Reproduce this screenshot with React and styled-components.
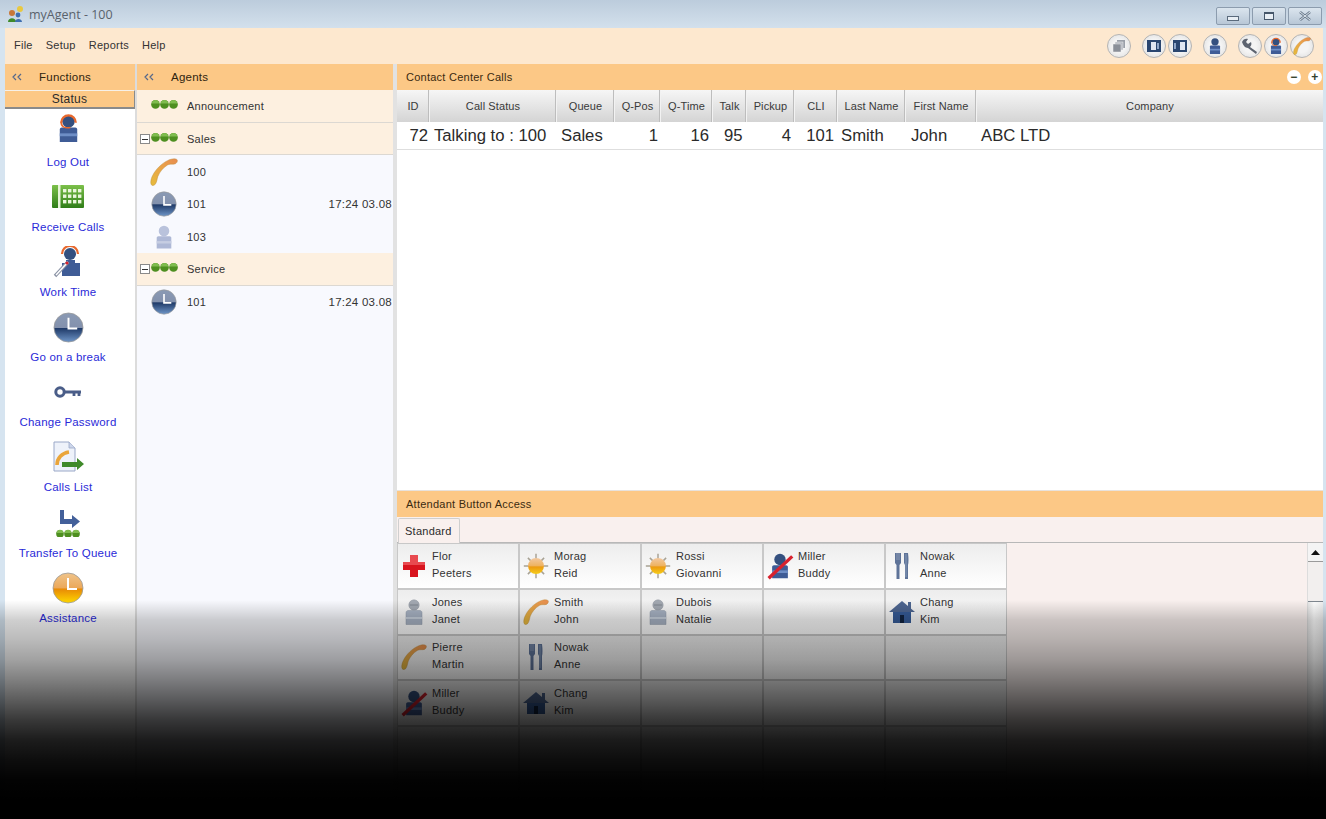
import styled, { createGlobalStyle } from "styled-components";

const GlobalStyle = createGlobalStyle`
  html, body {
    margin: 0;
    padding: 0;
    background: #000;
  }
  body {
    font-family: "Liberation Sans", Arial, sans-serif;
    font-size: 11px;
    letter-spacing: 0.25px;
    color: #2b2b2b;
  }
`;

const TABLE_COLUMNS = "33px 127px 58px 46px 52px 34px 48px 43px 68px 71px 1fr";

const PhoneIcon = ({ size = 28 }) => (
  <svg width={size} height={size} viewBox="0 0 32 32">
    <defs>
      <linearGradient id="phoneFill" x1="0" y1="1" x2="1" y2="0">
        <stop offset="0" stopColor="#e6bc3c" />
        <stop offset="0.6" stopColor="#eaa04a" />
        <stop offset="1" stopColor="#e88c50" />
      </linearGradient>
    </defs>
    <path
      d="M2 31 C0 29 1 24 3 20 C7 12 14 6 20 3 C24 1 29 0 31 2 C32 4 30 7 27 7 C24 7 22 7 20 8 C15 11 11 16 9 21 C8 24 8 27 6 30 C5 31 3 32 2 31 Z"
      fill="url(#phoneFill)"
      stroke="#b98a3a"
      strokeWidth="0.5"
    />
  </svg>
);

const ClockIcon = ({ size = 26, tone = "blue" }) => {
  const colors = tone === "blue"
    ? ["#8a9ab4", "#8391ad", "#1f3a68", "#6f96c8"]
    : ["#f0c48a", "#eba85a", "#e88a06", "#ffd800"];
  const id = `clockFill-${tone}`;
  return (
    <svg width={size} height={size} viewBox="0 0 32 32">
      <defs>
        <linearGradient id={id} x1="0" y1="0" x2="0" y2="1">
          <stop offset="0" stopColor={colors[0]} />
          <stop offset="0.5" stopColor={colors[1]} />
          <stop offset="0.53" stopColor={colors[2]} />
          <stop offset="1" stopColor={colors[3]} />
        </linearGradient>
      </defs>
      <circle cx="16" cy="16" r="15" fill={`url(#${id})`} stroke="#9a9a9a" strokeWidth="0.8" />
      <path d="M16 6 V17 H25" fill="none" stroke="#fff" strokeWidth="2" />
    </svg>
  );
};

const PersonIcon = ({ size = 28, pale, slash, headset }) => {
  const body = pale ? "#aeb8d6" : "#3f5c96";
  const head = pale ? "#b9c2dc" : "#34507f";
  return (
    <svg width={size} height={size} viewBox="0 0 32 32">
      <ellipse cx="16" cy="8.5" rx="6.5" ry="6.5" fill={head} />
      <path d="M9 15 H23 C24 15 25 16 25 17 V30 H7 V17 C7 16 8 15 9 15 Z" fill={body} />
      <rect x="7" y="21" width="18" height="3" fill={pale ? "#c6cde2" : "#6e8ec6"} />
      {headset && (
        <>
          <path d="M8.5 10 A7.5 7.5 0 0 1 23.5 10" fill="none" stroke="#e8692e" strokeWidth="2.4" />
          <path d="M8.5 9 C8 14 12 16 18 15" fill="none" stroke="#e8692e" strokeWidth="1.6" />
        </>
      )}
      {slash && <path d="M3 30 L30 5" stroke="#d8222e" strokeWidth="3.8" />}
    </svg>
  );
};

const GreyPersonIcon = () => (
  <svg width="26" height="28" viewBox="0 0 26 28">
    <ellipse cx="13" cy="7" rx="5.2" ry="5.2" fill="#a3a9b2" stroke="#8d939c" strokeWidth="0.5" />
    <path d="M9 7 H17" stroke="#7f858e" strokeWidth="1" />
    <path d="M7 12.5 H19 C20 12.5 21 13.5 21 14.5 V26.5 H5 V14.5 C5 13.5 6 12.5 7 12.5 Z" fill="#a8b3c4" stroke="#8f99a9" strokeWidth="0.5" />
    <rect x="5" y="19" width="16" height="2" fill="#c7d0dc" />
  </svg>
);

const WorkTimeIcon = () => (
  <svg width="32" height="32" viewBox="0 0 32 32">
    <ellipse cx="18" cy="8" rx="6" ry="6" fill="#34507f" />
    <path d="M10 8 A8 8 0 0 1 26 8" fill="none" stroke="#e8692e" strokeWidth="2.2" />
    <path d="M14 14 H23 V17 H28 V30 H10 V17 H14 Z" fill="#3f5c96" />
    <path d="M3 30 L16 16" stroke="#8b93a5" strokeWidth="3.4" />
    <path d="M4 29 L16 16" stroke="#fff" strokeWidth="1.4" />
    <circle cx="15" cy="17" r="1.6" fill="#d8222e" />
  </svg>
);

const KeypadIcon = () => (
  <svg width="32" height="24" viewBox="0 0 32 24">
    <defs>
      <linearGradient id="keypadFill" x1="0" y1="0" x2="0" y2="1">
        <stop offset="0" stopColor="#7cc04a" />
        <stop offset="1" stopColor="#2f7d18" />
      </linearGradient>
    </defs>
    <rect width="32" height="23" rx="1" fill="url(#keypadFill)" />
    <rect x="6" width="2.5" height="23" fill="#e6f4d8" />
    {[0, 1, 2].map(row =>
      [0, 1, 2, 3].map(col => (
        <rect key={`${row}-${col}`} x={11 + col * 5} y={4 + row * 5.5} width="3.4" height="3.4" fill="#eaf6dc" />
      ))
    )}
  </svg>
);

const KeyIcon = () => (
  <svg width="28" height="14" viewBox="0 0 28 14">
    <circle cx="6" cy="7" r="4.2" fill="none" stroke="#4a5d88" strokeWidth="3" />
    <path d="M10 7 H27 M20 7 V11 M25 7 V11" fill="none" stroke="#4a5d88" strokeWidth="2.8" />
  </svg>
);

const CallsListIcon = () => (
  <svg width="32" height="32" viewBox="0 0 32 32">
    <path d="M2 1 H17 L23 7 V30 H2 Z" fill="#eef2fa" stroke="#9aa8c8" strokeWidth="1" />
    <path d="M17 1 V7 H23" fill="#cdd6ea" stroke="#9aa8c8" strokeWidth="0.8" />
    <path d="M5 24 C5 17 10 12 17 11" fill="none" stroke="#eaa53a" strokeWidth="3.6" />
    <path d="M10 21 H25 V17 L32 23 L25 29 V26 H10 Z" fill="#3f8a2a" />
  </svg>
);

const DotsIcon = ({ width = 27 }) => (
  <svg width={width} height={width / 2.5} viewBox="0 0 30 12">
    {[5, 15, 25].map(cx => (
      <g key={cx}>
        <circle cx={cx} cy="6" r="4.8" fill="#4e8f20" />
        <path d={`M${cx - 4} 5 A4 4 0 0 1 ${cx + 4} 5 Z`} fill="#7fbc4e" />
      </g>
    ))}
  </svg>
);

const TransferIcon = () => (
  <svg width="30" height="28" viewBox="0 0 30 28">
    <path d="M7 1 H11 V10 H19 V6 L27 12.5 L19 19 V15 H7 Z" fill="#43609a" />
    <g transform="translate(3 20)">
      <DotsIcon width={24} />
    </g>
  </svg>
);

const SunIcon = () => (
  <svg width="26" height="26" viewBox="0 0 32 32">
    <defs>
      <linearGradient id="sunFill" x1="0" y1="0" x2="0" y2="1">
        <stop offset="0" stopColor="#f2c8a0" />
        <stop offset="0.5" stopColor="#eeb25e" />
        <stop offset="0.55" stopColor="#ec9a10" />
        <stop offset="1" stopColor="#f5cc1a" />
      </linearGradient>
    </defs>
    <path
      d="M16 1 V8 M16 24 V31 M1 16 H8 M24 16 H31 M6 6 L10 10 M22 22 L26 26 M26 6 L22 10 M6 26 L10 22"
      stroke="#a8a294"
      strokeWidth="1.8"
    />
    <circle cx="16" cy="16" r="9.8" fill="url(#sunFill)" />
  </svg>
);

const CrossIcon = () => (
  <svg width="22" height="22" viewBox="0 0 22 22">
    <path d="M7 0 H15 V7 H22 V15 H15 V22 H7 V15 H0 V7 H7 Z" fill="#d8141e" />
    <path d="M7 0 H15 V7 H22 V10 H0 V7 H7 Z" fill="#e84a50" />
  </svg>
);

const CutleryIcon = () => (
  <svg width="14" height="26" viewBox="0 0 14 26">
    <path d="M0 0 H6 V10 L4.5 12 V26 H1.5 V12 L0 10 Z" fill="#5e7398" />
    <path d="M2 0 V7 M4 0 V7" stroke="#aab6ca" strokeWidth="0.6" />
    <path d="M9 0 H13 Q14 8 13 12 V26 H10 V12 L9 10 Z" fill="#5e7398" />
    <path d="M11 1 V24" stroke="#93a4c0" strokeWidth="0.8" />
  </svg>
);

const HouseIcon = () => (
  <svg width="26" height="24" viewBox="0 0 26 24">
    <path d="M13 1 L26 12 H0 Z" fill="#4d6590" />
    <rect x="19" y="2" width="3" height="7" fill="#4d6590" />
    <rect x="4" y="12" width="18" height="11" fill="#355a96" />
    <rect x="11" y="15" width="4" height="8" fill="#10223f" />
  </svg>
);

const CopyGlyph = () => (
  <svg width="14" height="14" viewBox="0 0 14 14">
    <rect x="5" y="1" width="8" height="8" fill="#9a9fa8" />
    <rect x="3" y="3" width="8" height="8" fill="#b2b6be" stroke="#eee" strokeWidth="0.5" />
    <rect x="1" y="5" width="8" height="8" fill="#8a8f98" stroke="#eee" strokeWidth="0.5" />
  </svg>
);

const ScreenGlyph = ({ flip }) => (
  <svg width="16" height="14" viewBox="0 0 16 14">
    <rect x="1" y="1" width="14" height="12" fill="#2a4670" />
    <rect x={flip ? 8 : 5} y="3" width="5" height="8" fill="#dfe6f2" />
    <rect x={flip ? 2 : 11} y="4" width="2" height="6" fill="#8fa6c8" />
  </svg>
);

const WrenchGlyph = () => (
  <svg width="18" height="18" viewBox="0 0 18 18">
    <path d="M1 5 C2 2 5 1 7 2 L5 5 L7 7 L10 5 C11 7 10 9 9 10 L16 15 L15 17 L7 11 C4 11 2 8 1 5 Z" fill="#5d6470" />
  </svg>
);

const TOOLBAR_GROUPS = [
  [<CopyGlyph key="copy" />],
  [<ScreenGlyph key="in" />, <ScreenGlyph key="out" flip />],
  [<PersonIcon key="agent" size={18} />],
  [
    <WrenchGlyph key="wrench" />,
    <PersonIcon key="headset" size={18} headset />,
    <PhoneIcon key="phone" size={18} />,
  ],
];

const FUNCTIONS = [
  { label: "Log Out", icon: <PersonIcon size={31} headset />, lift: 8 },
  { label: "Receive Calls", icon: <KeypadIcon /> },
  { label: "Work Time", icon: <WorkTimeIcon /> },
  { label: "Go on a break", icon: <ClockIcon size={31} /> },
  { label: "Change Password", icon: <KeyIcon /> },
  { label: "Calls List", icon: <CallsListIcon /> },
  { label: "Transfer To Queue", icon: <TransferIcon /> },
  { label: "Assistance", icon: <ClockIcon size={32} tone="orange" /> },
];

const AGENT_ROWS = [
  { kind: "group", name: "Announcement" },
  { kind: "group", name: "Sales", toggle: true },
  { name: "100", icon: <PhoneIcon /> },
  { name: "101", icon: <ClockIcon />, time: "17:24 03.08" },
  { name: "103", icon: <PersonIcon size={26} pale /> },
  { kind: "group", name: "Service", toggle: true },
  { name: "101", icon: <ClockIcon />, time: "17:24 03.08" },
];

const COLUMNS = [
  "ID", "Call Status", "Queue", "Q-Pos", "Q-Time", "Talk", "Pickup", "CLI", "Last Name", "First Name", "Company",
];

const CALL = [
  { text: "72", align: "right", pad: "0 2px 0 0" },
  { text: "Talking to : 100", pad: "0 0 0 4px" },
  { text: "Sales", pad: "0 0 0 4px" },
  { text: "1", align: "right", pad: "0 3px 0 0" },
  { text: "16", align: "right", pad: "0 4px 0 0" },
  { text: "95", pad: "0 0 0 11px" },
  { text: "4", align: "right", pad: "0 4px 0 0" },
  { text: "101", align: "right", pad: "0 4px 0 0" },
  { text: "Smith", pad: "0 0 0 3px" },
  { text: "John", pad: "0 0 0 5px" },
  { text: "ABC LTD", pad: "0 0 0 4px" },
];

const BUTTONS = [
  { top: "Flor", bottom: "Peeters", icon: <CrossIcon /> },
  { top: "Morag", bottom: "Reid", icon: <SunIcon /> },
  { top: "Rossi", bottom: "Giovanni", icon: <SunIcon /> },
  { top: "Miller", bottom: "Buddy", icon: <PersonIcon size={28} slash /> },
  { top: "Nowak", bottom: "Anne", icon: <CutleryIcon /> },
  { top: "Jones", bottom: "Janet", icon: <GreyPersonIcon /> },
  { top: "Smith", bottom: "John", icon: <PhoneIcon size={26} /> },
  { top: "Dubois", bottom: "Natalie", icon: <GreyPersonIcon /> },
  {},
  { top: "Chang", bottom: "Kim", icon: <HouseIcon /> },
  { top: "Pierre", bottom: "Martin", icon: <PhoneIcon size={26} /> },
  { top: "Nowak", bottom: "Anne", icon: <CutleryIcon /> },
  {}, {}, {},
  { top: "Miller", bottom: "Buddy", icon: <PersonIcon size={28} slash /> },
  { top: "Chang", bottom: "Kim", icon: <HouseIcon /> },
  {}, {}, {},
  {}, {}, {}, {}, {},
  {}, {}, {}, {}, {},
];

const CaretLeft = () => (
  <CollapseMark viewBox="0 0 10 8" width="10" height="8">
    <path d="M4 1 L1 4 L4 7 M9 1 L6 4 L9 7" fill="none" stroke="#56688a" strokeWidth="1.2" />
  </CollapseMark>
);

const App = () => (
  <>
    <GlobalStyle />
    <Window>
      <TitleBar>
        <AppLogo viewBox="0 0 18 18" width="18" height="18">
          <circle cx="13" cy="4" r="3" fill="#e8c840" />
          <circle cx="5" cy="8" r="3" fill="#c87838" />
          <path d="M1 17 C1 12 9 12 9 17 Z" fill="#3f8a2a" />
          <circle cx="11" cy="10" r="2.4" fill="#3f6fb0" />
          <path d="M8 17 C8 13 15 13 15 17 Z" fill="#3f6fb0" />
        </AppLogo>
        <WindowTitle>myAgent - 100</WindowTitle>
        <WindowControls>
          <WindowButton><MinimizeMark /></WindowButton>
          <WindowButton><MaximizeMark /></WindowButton>
          <WindowButton>
            <svg width="14" height="10" viewBox="0 0 14 10">
              <path d="M2 1 L12 9 M12 1 L2 9" stroke="#6a7a8c" strokeWidth="2.6" />
              <path d="M2 1 L12 9 M12 1 L2 9" stroke="#dde5ec" strokeWidth="1" />
            </svg>
          </WindowButton>
        </WindowControls>
      </TitleBar>

      <Frame>
        <MenuBar>
          <MenuItem>File</MenuItem>
          <MenuItem>Setup</MenuItem>
          <MenuItem>Reports</MenuItem>
          <MenuItem>Help</MenuItem>
          <Toolbar>
            {TOOLBAR_GROUPS.map((group, i) => (
              <ToolGroup key={i}>
                {group.map(item => <ToolButton key={item.key}>{item}</ToolButton>)}
              </ToolGroup>
            ))}
          </Toolbar>
        </MenuBar>

        <Columns>
          <FunctionsPane>
            <PaneHeader>
              <CaretLeft />
              <PaneTitle>Functions</PaneTitle>
            </PaneHeader>
            <StatusTab>Status</StatusTab>
            <FunctionList>
              {FUNCTIONS.map(item => (
                <FunctionItem key={item.label}>
                  <FunctionIcon $lift={item.lift}>{item.icon}</FunctionIcon>
                  <FunctionLabel>{item.label}</FunctionLabel>
                </FunctionItem>
              ))}
            </FunctionList>
          </FunctionsPane>

          <AgentsPane>
            <PaneHeader>
              <CaretLeft />
              <PaneTitle>Agents</PaneTitle>
            </PaneHeader>
            {AGENT_ROWS.map((row, i) => (
              <AgentRow key={i} $group={row.kind === "group"}>
                <ToggleSlot>{row.toggle && <Toggle />}</ToggleSlot>
                <AgentIcon $group={row.kind === "group"}>
                  {row.kind === "group" ? <DotsIcon /> : row.icon}
                </AgentIcon>
                <AgentName>{row.name}</AgentName>
                {row.time && <AgentTime>{row.time}</AgentTime>}
              </AgentRow>
            ))}
          </AgentsPane>

          <MainPane>
            <CallsPanel>
              <PanelHeader>
                Contact Center Calls
                <ZoomButtons>
                  <ZoomButton>−</ZoomButton>
                  <ZoomButton>+</ZoomButton>
                </ZoomButtons>
              </PanelHeader>
              <TableHead>
                {COLUMNS.map(name => <HeadCell key={name}>{name}</HeadCell>)}
              </TableHead>
              <TableRow>
                {CALL.map((cell, i) => (
                  <RowCell key={i} $align={cell.align} $pad={cell.pad}>{cell.text}</RowCell>
                ))}
              </TableRow>
            </CallsPanel>

            <AttendantPanel>
              <PanelHeader>Attendant Button Access</PanelHeader>
              <TabStrip>
                <Tab>Standard</Tab>
              </TabStrip>
              <AttendantBody>
                <ButtonGrid>
                  {BUTTONS.map((button, i) => (
                    <AttendantButton key={i}>
                      <ButtonIcon>{button.icon}</ButtonIcon>
                      <ButtonText>
                        <span>{button.top}</span>
                        <span>{button.bottom}</span>
                      </ButtonText>
                    </AttendantButton>
                  ))}
                </ButtonGrid>
                <ScrollBar>
                  <ScrollArrow>
                    <svg width="9" height="5" viewBox="0 0 9 5"><path d="M4.5 0 L9 5 H0 Z" fill="#111" /></svg>
                  </ScrollArrow>
                  <ScrollThumb />
                </ScrollBar>
              </AttendantBody>
            </AttendantPanel>
          </MainPane>
        </Columns>
      </Frame>
      <Fade />
    </Window>
  </>
);

const Window = styled.div`
  position: relative;
  display: flex;
  flex-direction: column;
  width: 1326px;
  height: 819px;
  overflow: hidden;
  background: #d6e4f0;
`;

const TitleBar = styled.div`
  display: flex;
  align-items: center;
  height: 28px;
  padding: 0 4px 0 7px;
  background: linear-gradient(#bcccdc, #d3e0ec);
`;

const AppLogo = styled.svg`
  margin-right: 4px;
`;

const WindowTitle = styled.span`
  font-family: "Open Sans", sans-serif;
  font-size: 12.5px;
  letter-spacing: 0;
  color: #59626c;
`;

const WindowControls = styled.div`
  display: flex;
  gap: 2px;
  margin: 4px 0 0 auto;
`;

const WindowButton = styled.div`
  display: flex;
  align-items: center;
  justify-content: center;
  width: 34px;
  height: 18px;
  box-sizing: border-box;
  border: 1px solid #8c9cae;
  border-radius: 2px;
  background: linear-gradient(#dbe5ee, #b8c7d6);
`;

const MinimizeMark = styled.div`
  width: 10px;
  height: 3px;
  margin-top: 4px;
  border: 1px solid #5a6a7c;
  background: #e8eef4;
`;

const MaximizeMark = styled.div`
  width: 8px;
  height: 5px;
  border: 1px solid #45566a;
  border-top-width: 2px;
  background: #e8eef4;
`;

const Frame = styled.div`
  display: flex;
  flex: 1;
  flex-direction: column;
  min-height: 0;
  margin: 0 3px 0 5px;
`;

const MenuBar = styled.div`
  display: flex;
  align-items: center;
  height: 36px;
  padding-left: 9px;
  background: #fde8cf;
`;

const MenuItem = styled.span`
  margin: 0 13px 2px 0;
  color: #333;
`;

const Toolbar = styled.div`
  display: flex;
  gap: 11px;
  margin-left: auto;
  padding-right: 9px;
`;

const ToolGroup = styled.div`
  display: flex;
  gap: 2px;
`;

const ToolButton = styled.div`
  display: flex;
  align-items: center;
  justify-content: center;
  width: 24px;
  height: 24px;
  border: 1px solid #b4b4b4;
  border-radius: 50%;
  box-sizing: border-box;
  background: radial-gradient(circle, #f4f4f4 40%, #dcdcdc);
`;

const Columns = styled.div`
  display: flex;
  flex: 1;
  min-height: 0;
`;

const PaneHeader = styled.div`
  display: flex;
  align-items: center;
  height: 25px;
  padding: 0 0 1px 7px;
  background: #fcc886;
  color: #2f2410;
`;

const CollapseMark = styled.svg`
  margin-right: 17px;
`;

const PaneTitle = styled.span`
  font-size: 11.5px;
`;

const FunctionsPane = styled.div`
  display: flex;
  flex-direction: column;
  width: 130px;
  background: #fff;
  border-right: 2px solid #dcdcdc;
  flex: none;
`;

const StatusTab = styled.div`
  height: 15px;
  line-height: 15px;
  padding-top: 1px;
  text-align: center;
  font-size: 12px;
  background: #fcc886;
  border-bottom: 2px solid #8a8a8a;
  border-right: 1px solid #8a8a8a;
  border-top: 1px solid #f6f0e8;
`;

const FunctionList = styled.div`
  display: flex;
  flex-direction: column;
  padding-right: 4px;
`;

const FunctionItem = styled.div`
  display: flex;
  flex-direction: column;
  align-items: center;
  height: 65.1px;
`;

const FunctionIcon = styled.div`
  display: flex;
  align-items: center;
  justify-content: center;
  height: ${props => 46 - (props.$lift || 0)}px;
  padding-bottom: ${props => props.$lift || 0}px;
`;

const FunctionLabel = styled.div`
  font-size: 11.5px;
  letter-spacing: 0.2px;
  line-height: 14px;
  color: #2a2ad8;
  white-space: nowrap;
`;

const AgentsPane = styled.div`
  display: flex;
  flex-direction: column;
  width: 256px;
  flex: none;
  background: #f8f9fe;
  border-right: 4px solid #e2e2e2;
`;

const AgentRow = styled.div`
  display: flex;
  align-items: center;
  height: 32.7px;
  box-sizing: border-box;
  padding-right: 1px;
  padding-left: 3px;
  background: ${props => (props.$group ? "#fdf0e0" : "transparent")};
  border-bottom: ${props => (props.$group ? "1px solid #dcd8d2" : "none")};
`;

const ToggleSlot = styled.div`
  width: 10px;
  flex: none;
`;

const Toggle = styled.div`
  position: relative;
  width: 8px;
  height: 8px;
  border: 1px solid #8a8a8a;
  background: #fff;

  &::after {
    content: "";
    position: absolute;
    left: 1px;
    right: 1px;
    top: 4px;
    height: 1px;
    background: #333;
  }
`;

const AgentIcon = styled.div`
  display: flex;
  align-items: center;
  justify-content: center;
  width: 28px;
  margin-right: 9px;
  margin-bottom: ${props => (props.$group ? "3px" : "0")};
  flex: none;
`;

const AgentName = styled.span`
  color: #333;
`;

const AgentTime = styled.span`
  margin-left: auto;
  font-size: 11.5px;
  color: #333;
`;

const MainPane = styled.div`
  display: flex;
  flex: 1;
  flex-direction: column;
  min-width: 0;
`;

const CallsPanel = styled.div`
  flex: none;
  height: 426px;
  background: #fff;
`;

const PanelHeader = styled.div`
  display: flex;
  align-items: center;
  height: 26px;
  padding-left: 9px;
  background: #fcc886;
  color: #3a2a10;
`;

const ZoomButtons = styled.div`
  display: flex;
  gap: 7px;
  margin-left: auto;
  padding-right: 1px;
`;

const ZoomButton = styled.div`
  width: 14px;
  height: 14px;
  line-height: 14px;
  text-align: center;
  border-radius: 50%;
  font-size: 12px;
  font-weight: 700;
  color: #33402c;
  background: #fff;
`;

const TableHead = styled.div`
  display: grid;
  grid-template-columns: ${TABLE_COLUMNS};
  height: 32px;
  background: linear-gradient(#f6f6f6, #d4d4d4);
`;

const HeadCell = styled.div`
  display: flex;
  align-items: center;
  justify-content: center;
  border-right: 1px solid #f2f2f2;
  box-shadow: inset -1px 0 0 #bdbdbd;
  color: #3a3a3a;
  white-space: nowrap;
  letter-spacing: 0.1px;

  &:last-child {
    border-right: none;
    box-shadow: none;
  }
`;

const TableRow = styled.div`
  display: grid;
  grid-template-columns: ${TABLE_COLUMNS};
  height: 28px;
  box-sizing: border-box;
  border-bottom: 1px solid #dedede;
`;

const RowCell = styled.div`
  padding: ${props => props.$pad};
  line-height: 28px;
  text-align: ${props => props.$align || "left"};
  font-size: 16.7px;
  letter-spacing: 0;
  color: #2a2a2a;
  white-space: nowrap;
`;

const AttendantPanel = styled.div`
  display: flex;
  flex: 1;
  flex-direction: column;
  min-height: 0;
  border-top: 1px solid #e8e2dc;
`;

const TabStrip = styled.div`
  display: flex;
  align-items: flex-end;
  height: 25px;
  flex: none;
  padding-left: 1px;
  background: #f9f0ee;
  border-bottom: 1px solid #b8b8b8;
`;

const Tab = styled.div`
  height: 24px;
  line-height: 24px;
  margin-bottom: -1px;
  padding: 0 7px 0 6px;
  background: #f9f0ee;
  border: 1px solid #cfcfcf;
  border-bottom: none;
  border-radius: 2px 2px 0 0;
`;

const AttendantBody = styled.div`
  display: flex;
  flex: 1;
  min-height: 0;
  overflow: hidden;
  background: #f9f0ee;
`;

const ButtonGrid = styled.div`
  display: grid;
  grid-template-columns: repeat(5, 120px);
  grid-auto-rows: 43.8px;
  gap: 2px;
  align-content: start;
  padding: 1px 1px 0;
  background: #c8c8c8;
`;

const AttendantButton = styled.div`
  display: flex;
  align-items: center;
  background: linear-gradient(#ededed, #fff);
`;

const ButtonIcon = styled.div`
  display: flex;
  align-items: center;
  justify-content: center;
  width: 30px;
  margin: 0 3px 0 1px;
  flex: none;
`;

const ButtonText = styled.div`
  display: flex;
  flex-direction: column;
  padding-bottom: 2px;
  line-height: 17px;
  color: #333;
`;

const ScrollBar = styled.div`
  display: flex;
  flex-direction: column;
  width: 16px;
  margin-left: auto;
  background: linear-gradient(90deg, #e6e6e6, #fff 40%, #f0f0f0);
  border-left: 1px solid #dcdcdc;
  box-sizing: border-box;
`;

const ScrollArrow = styled.div`
  display: flex;
  align-items: center;
  justify-content: center;
  height: 18px;
  background: #f4f4f4;
  border-bottom: 1px solid #9a9a9a;
`;

const ScrollThumb = styled.div`
  height: 39px;
  background: #f2efee;
  border-bottom: 1px solid #808890;
`;

const Fade = styled.div`
  position: absolute;
  left: 0;
  right: 0;
  top: 600px;
  bottom: 0;
  pointer-events: none;
  background: linear-gradient(
    rgba(0, 0, 0, 0) 0,
    rgba(0, 0, 0, 0.19) 20px,
    rgba(0, 0, 0, 0.27) 40px,
    rgba(0, 0, 0, 0.37) 60px,
    rgba(0, 0, 0, 0.5) 80px,
    rgba(0, 0, 0, 0.64) 100px,
    rgba(0, 0, 0, 0.78) 120px,
    rgba(0, 0, 0, 0.89) 140px,
    rgba(0, 0, 0, 0.95) 160px,
    rgba(0, 0, 0, 0.99) 180px,
    rgba(0, 0, 0, 1) 200px
  );
`;

export default App;
